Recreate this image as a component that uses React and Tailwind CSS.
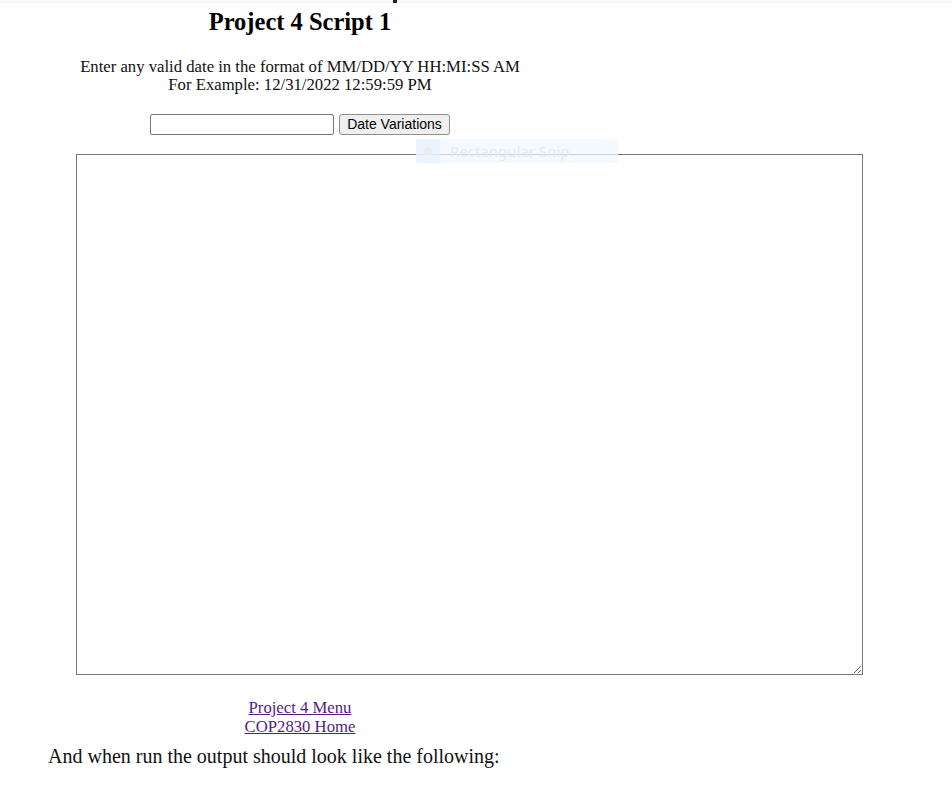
import React from 'react'

const serif = "font-['Liberation_Serif','Times_New_Roman',serif]"

export default function App() {
  return (
    <div className={`relative w-[952px] h-[786px] bg-white text-black ${serif}`}>
      {/* cut-off line from the page above */}
      <div className="h-[3px] bg-[#f7f7f7] flex">
        <div className="ml-[393px] w-[4px] h-[3px] bg-[#222]" />
      </div>

      <div className="w-[600px] text-center">
        <h1 className="mt-[5px] text-[24.5px] leading-[28px] font-bold">Project 4 Script 1</h1>
        <p className="mt-[22px] text-[16.7px] leading-[18px] text-[#111]">
          Enter any valid date in the format of MM/DD/YY HH:MI:SS AM
          <br />
          For Example: 12/31/2022 12:59:59 PM
        </p>
        <div className="mt-[20px] flex justify-center items-center gap-[5px]">
          <input
            type="text"
            className="w-[184px] h-[21px] border border-[#767676] rounded-[2px] bg-white px-1 text-[13px] font-['Liberation_Sans',Arial,sans-serif]"
          />
          <button className="h-[21px] px-[7px] border border-[#8f8f8f] rounded-[3px] bg-[#efefef] text-[14px] leading-[19px] text-black font-['Liberation_Sans',Arial,sans-serif]">
            Date Variations
          </button>
        </div>
      </div>

      <textarea
        className="block mt-[19px] ml-[76px] w-[787px] h-[521px] border border-[#767676] bg-white resize-y outline-none"
        readOnly
      />

      <div className="w-[600px] text-center mt-[23px] text-[16.7px] leading-[19px]">
        <a href="#" className="text-[#551a8b] underline">Project 4 Menu</a>
        <br />
        <a href="#" className="text-[#551a8b] underline">COP2830 Home</a>
      </div>

      <p className="ml-[48px] mt-[8px] text-[20px] leading-[24px] text-[#111]">
        And when run the output should look like the following:
      </p>

      {/* faded snipping tool tooltip */}
      <div className="absolute left-[416px] top-[139px] w-[202px] h-[24px] bg-[#eef6ff]/70 flex items-center font-['Noto_Sans',sans-serif]">
        <div className="w-[24px] h-full bg-[#e6f1fd]/70 flex items-center justify-center">
          <div className="w-[8px] h-[8px] rounded-full bg-[#ececec]" />
        </div>
        <span className="ml-[10px] text-[15px] text-[#e6e9ee]">Rectangular Snip</span>
      </div>
    </div>
  )
}
